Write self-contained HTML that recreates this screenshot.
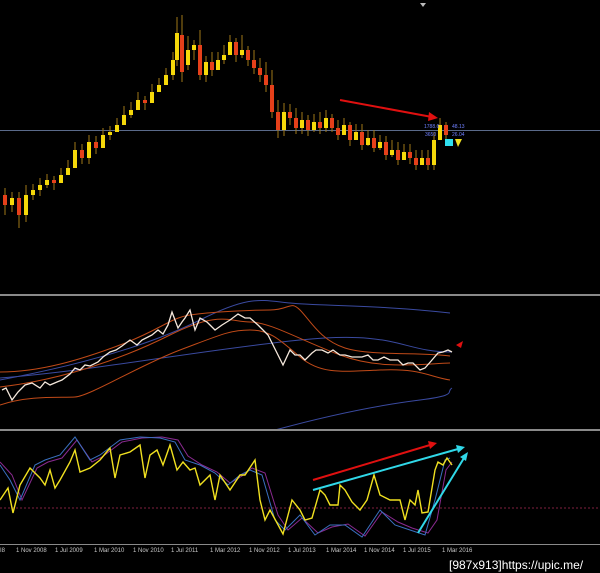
<!DOCTYPE html>
<html><head><meta charset="utf-8"><style>
html,body{margin:0;padding:0;background:#000;width:600px;height:573px;overflow:hidden}
svg{display:block}
text{font-family:"Liberation Sans",sans-serif}
</style></head><body>
<svg width="600" height="573" viewBox="0 0 600 573" xmlns="http://www.w3.org/2000/svg">
<rect width="600" height="573" fill="#000"/>
<path d="M420 3 L426 3 L423 7Z" fill="#bbb"/>
<line x1="0" y1="130.5" x2="600" y2="130.5" stroke="#5a6a8a" stroke-width="1"/>
<!-- wicks -->
<path fill="none" stroke="#a07818" stroke-width="1" d="M5 188V215 M12 192V212 M19 192V228 M26 185V222 M33 184V200 M40 178V196 M47 174V188 M54 176V190 M61 168V182 M68 160V175 M75 142V158 M82 144V164 M89 135V164 M96 136V154 M103 128V142 M110 126V140 M117 118V132 M124 106V122 M131 102V118 M138 92V106 M145 96V110 M152 84V98 M159 78V92 M166 68V82 M173 52V80 M177 17V66 M182 15V82 M188 36V70 M194 40V60 M200 30V80 M206 56V82 M212 52V76 M218 52V68 M224 45V64 M230 35V52 M236 38V62 M242 35V58 M248 46V66 M254 50V74 M260 58V82 M266 62V92 M272 70V118 M278 100V138 M284 103V136 M290 104V125 M296 108V134 M302 112V134 M308 115V136 M314 114V132 M320 112V134 M326 110V132 M332 114V132 M338 120V140 M344 118V132 M350 122V146 M356 124V140 M362 124V150 M368 130V146 M374 130V152 M380 135V150 M386 136V160 M392 140V157 M398 142V165 M404 144V158 M410 144V164 M416 150V170 M422 150V165 M428 150V170 M434 132V170 M440 118V140 M446 122V140"/>
<!-- yellow bodies -->
<path fill="none" stroke="#f5d80a" stroke-width="4" d="M12 198V205 M26 195V215 M33 190V195 M40 185V190 M47 180V185 M61 175V183 M68 168V175 M75 150V168 M89 142V158 M103 135V148 M110 132V135 M117 125V132 M124 115V125 M131 110V115 M138 100V110 M152 92V103 M159 85V92 M166 75V85 M173 60V75 M177 33V60 M188 50V65 M194 45V50 M206 62V75 M218 60V70 M224 55V60 M230 42V55 M242 50V55 M284 112V130 M302 120V128 M314 122V130 M326 118V128 M344 125V135 M356 132V140 M368 138V145 M380 142V148 M392 150V155 M404 152V160 M422 158V165 M434 140V165 M440 125V140"/>
<!-- red bodies -->
<path fill="none" stroke="#e6401a" stroke-width="4" d="M5 195V205 M19 198V215 M54 180V183 M82 150V158 M96 142V148 M145 100V103 M182 35V72 M200 45V75 M212 62V70 M236 42V55 M248 50V60 M254 60V68 M260 68V75 M266 75V85 M272 85V112 M278 112V130 M290 112V118 M296 118V128 M308 120V130 M320 122V128 M332 118V128 M338 128V135 M350 125V140 M362 132V145 M374 138V148 M386 142V155 M398 150V160 M410 152V158 M416 158V165 M428 158V165 M446 125V135"/>
<line x1="340" y1="100" x2="432" y2="117" stroke="#e01010" stroke-width="2"/>
<path d="M438 118 L429 112 L428 121Z" fill="#e01010"/>
<text x="424" y="128" font-size="5" fill="#7080ff">1788.6</text><text x="452" y="128" font-size="5" fill="#7080ff">48.13</text>
<text x="425" y="136" font-size="5" fill="#7080ff">3650</text><text x="452" y="136" font-size="5" fill="#7080ff">26.04</text>
<rect x="445" y="139" width="8" height="7" fill="#30e0f0"/><path d="M455 139 L462 139 L458 147Z" fill="#f0e020"/>
<rect x="0" y="294" width="600" height="2" fill="#8a8a8a"/>
<g fill="none" stroke-width="1">
<path d="M0 380 C80 365 150 345 200 320 S260 300 290 303 S380 305 450 313" stroke="#3a4aa0"/>
<path d="M0 378 C100 370 200 350 300 340 S400 352 452 352" stroke="#3a4aa0"/>
<path d="M275 430 C330 415 380 405 420 400 S445 392 452 388" stroke="#3a4aa0"/>
<path d="M0 372 C40 372 80 360 120 345 S170 318 190 315 S250 310 270 310 S290 300 300 310 S320 340 345 348 S420 352 450 356" stroke="#c04a18"/>
<path d="M0 387 C60 380 120 360 170 335 S230 322 250 322 S300 340 340 355 S420 364 450 363" stroke="#c04a18"/>
<path d="M0 405 C30 395 60 398 75 397 S140 365 180 350 S230 330 250 330 S280 340 300 357 S340 372 380 370 S430 377 450 380" stroke="#c04a18"/>
<polyline stroke="#f5e8dc" stroke-width="1.3" points="2,390 6,388 12,400 18,392 25,385 32,383 40,388 45,382 50,385 57,382 62,380 70,374 75,368 80,370 85,365 90,366 98,362 103,357 110,352 116,350 122,346 130,340 137,345 142,340 148,337 152,335 158,330 163,334 168,325 172,312 178,328 182,322 185,318 190,310 195,330 200,318 207,322 210,325 215,330 222,325 230,320 238,314 245,318 250,318 258,325 263,330 268,335 273,345 278,355 283,365 290,350 295,355 300,355 305,360 312,353 316,350 322,350 328,353 333,350 340,355 345,355 352,357 358,357 362,357 368,355 373,360 378,360 384,357 390,360 398,360 403,365 408,363 413,363 420,370 425,368 432,360 438,353 443,352 448,350 452,352"/>
</g>
<path d="M456 345 L463 341 L461 348Z" fill="#e01010"/>
<rect x="0" y="429" width="600" height="2" fill="#8a8a8a"/>
<line x1="0" y1="508" x2="600" y2="508" stroke="#802040" stroke-width="1" stroke-dasharray="2,2"/>
<g fill="none" stroke-width="1">
<polyline stroke="#8a2a90" points="0,462 12,475 22,500 37,468 48,462 62,458 77,440 92,462 102,457 122,442 142,438 162,437 178,440 188,456 202,465 217,472 230,483 242,476 252,468 265,473 278,515 288,530 302,518 318,533 332,527 348,524 365,536 382,512 398,522 412,528 428,533 437,520 446,470 452,462"/>
<polyline stroke="#3a70c0" points="0,465 10,480 20,500 35,465 45,460 60,455 75,437 90,460 100,455 120,440 140,437 160,438 175,442 185,460 200,465 215,473 228,485 240,475 250,470 262,475 275,520 285,530 300,515 315,535 330,525 345,525 362,537 380,510 395,525 410,530 425,535 435,500 445,460 450,458"/>
<polyline stroke="#f0e020" stroke-width="1.4" points="0,500 8,488 13,513 20,485 30,468 40,478 45,485 50,470 55,488 60,480 70,462 75,450 80,472 90,468 100,460 110,448 115,478 120,455 130,452 140,445 145,478 150,455 157,450 163,465 170,445 177,470 183,462 190,470 195,468 200,485 210,475 215,500 220,475 230,490 240,475 245,475 255,460 260,500 265,520 270,510 283,534 292,500 300,510 305,520 312,518 320,490 325,495 330,505 338,505 340,485 345,490 352,502 360,510 367,500 374,475 380,495 390,500 400,500 405,520 410,500 415,505 418,490 422,513 428,512 435,470 438,462 443,465 447,458 452,465"/>
</g>
<line x1="313" y1="480" x2="430" y2="445" stroke="#e01010" stroke-width="2"/><path d="M437 443 L428 441 L430 449Z" fill="#e01010"/>
<line x1="313" y1="490" x2="458" y2="449" stroke="#30d8e8" stroke-width="2"/><path d="M465 447 L456 445 L458 453Z" fill="#30d8e8"/>
<line x1="418" y1="533" x2="464" y2="458" stroke="#30d8e8" stroke-width="2"/><path d="M468 452 L460 457 L466 461Z" fill="#30d8e8"/>
<line x1="0" y1="544.5" x2="600" y2="544.5" stroke="#8a8a8a" stroke-width="1"/>
<g font-size="6" fill="#c8c8c8">
<text x="0" y="552">I8</text><text x="16" y="552">1 Nov 2008</text><text x="55" y="552">1 Jul 2009</text><text x="94" y="552">1 Mar 2010</text><text x="133" y="552">1 Nov 2010</text><text x="171" y="552">1 Jul 2011</text><text x="210" y="552">1 Mar 2012</text><text x="249" y="552">1 Nov 2012</text><text x="288" y="552">1 Jul 2013</text><text x="326" y="552">1 Mar 2014</text><text x="364" y="552">1 Nov 2014</text><text x="403" y="552">1 Jul 2015</text><text x="442" y="552">1 Mar 2016</text>
</g>
<text x="449" y="569" font-size="12" fill="#fff" font-family="Liberation Mono,monospace">[987x913]https://upic.me/</text>
</svg>
</body></html>
